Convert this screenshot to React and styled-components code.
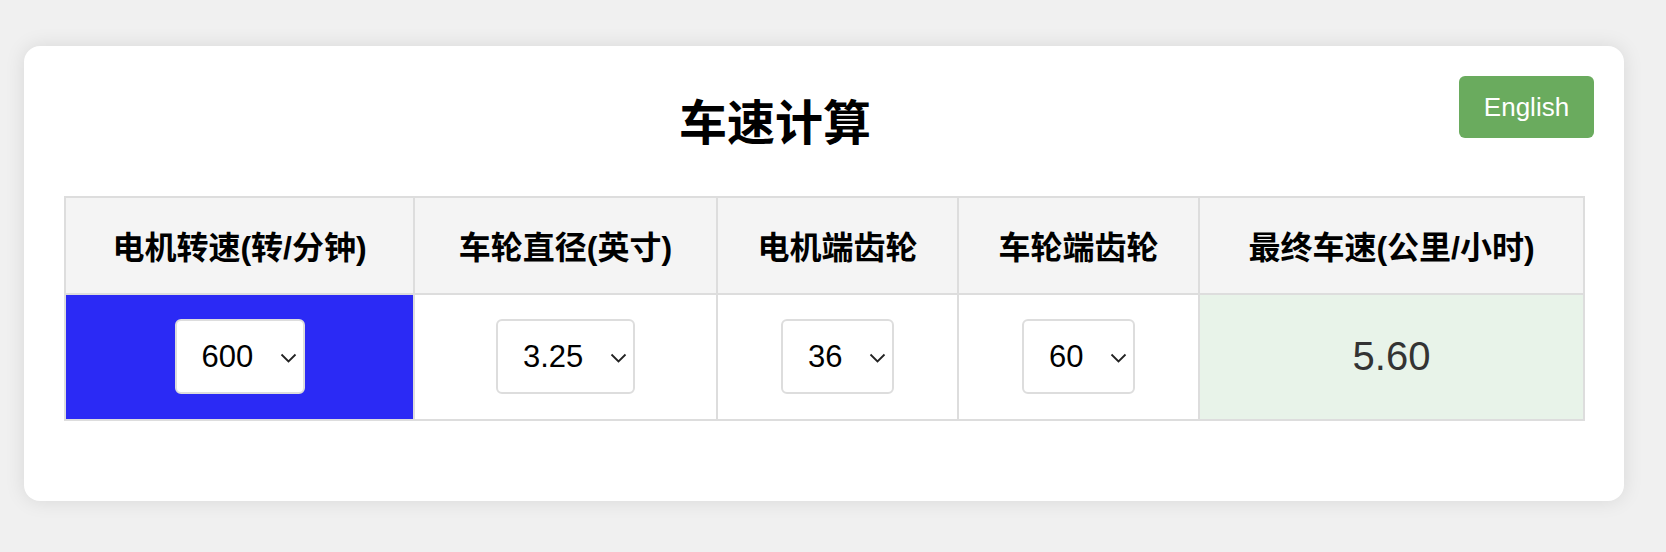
import React, { useState } from "react";
import styled, { createGlobalStyle } from "styled-components";

const GlobalStyle = createGlobalStyle`
  body {
    margin: 0;
    background: #f0f0f0;
    font-family: "Liberation Sans", Arial, "Noto Sans CJK SC", sans-serif;
  }
`;

const Page = styled.div`
  padding: 46px 0 40px 24px;
`;

const Card = styled.div`
  position: relative;
  box-sizing: border-box;
  width: 1600px;
  padding: 40px 40px 80px;
  background: #fff;
  border-radius: 16px;
  box-shadow: 0 0 20px rgba(0, 0, 0, 0.1);
`;

const LangButton = styled.button`
  position: absolute;
  top: 30px;
  right: 30px;
  width: 135px;
  height: 62px;
  border: none;
  border-radius: 6px;
  background: #6aab5e;
  color: #fff;
  font-family: inherit;
  font-size: 26px;
  cursor: pointer;
`;

const Title = styled.h1`
  margin: 9px 98px 43px 0;
  font-size: 48px;
  line-height: 1.2;
  font-weight: bold;
  text-align: center;
  color: #000;
`;

const Table = styled.table`
  width: 1519px;
  table-layout: fixed;
  border-collapse: collapse;
  border: 2px solid #ddd;
`;

const HeadCell = styled.th`
  height: 95px;
  padding: 0;
  border: 2px solid #ddd;
  background: #f4f4f4;
  font-size: 32px;
  font-weight: bold;
  color: #000;
  text-align: center;
`;

const Cell = styled.td`
  height: 124px;
  padding: 0;
  border: 2px solid #ddd;
  background: ${(p) => p.$bg || "#fff"};
  text-align: center;
  vertical-align: middle;
`;

const SelectWrap = styled.span`
  position: relative;
  display: inline-block;
  vertical-align: middle;
`;

const Select = styled.select`
  appearance: none;
  -webkit-appearance: none;
  display: block;
  height: 75px;
  padding: 0 49px 0 25px;
  border: 2px solid #ddd;
  border-radius: 6px;
  background: #fff;
  font-family: inherit;
  font-size: 31px;
  color: #000;
  outline: none;
`;

const Chevron = styled.svg`
  position: absolute;
  right: 8px;
  top: 50%;
  width: 17px;
  height: 10px;
  margin-top: -4px;
  pointer-events: none;
`;

const Result = styled.span`
  font-size: 40px;
  color: #333;
`;

const columns = [
  { label: "电机转速(转/分钟)", width: 349 },
  { label: "车轮直径(英寸)", width: 303 },
  { label: "电机端齿轮", width: 241 },
  { label: "车轮端齿轮", width: 241 },
  { label: "最终车速(公里/小时)", width: 385 },
];

const rpmOptions = [300, 400, 500, 600, 700, 800, 900];
const wheelOptions = ["2.50", "3.00", "3.25", "3.50", "4.00"];
const motorGears = [24, 30, 36, 42, 48];
const wheelGears = [48, 54, 60, 66, 72];

const Dropdown = ({ value, options, onChange }) => (
  <SelectWrap>
    <Select value={value} onChange={(e) => onChange(e.target.value)}>
      {options.map((o) => (
        <option key={o}>{o}</option>
      ))}
    </Select>
    <Chevron viewBox="0 0 17 10">
      <polyline points="1.5,1.5 8.5,8.5 15.5,1.5" fill="none" stroke="#222" strokeWidth="1.8" />
    </Chevron>
  </SelectWrap>
);

export default function App() {
  const [rpm, setRpm] = useState("600");
  const [wheel, setWheel] = useState("3.25");
  const [motor, setMotor] = useState("36");
  const [gear, setGear] = useState("60");
  const [lang, setLang] = useState("zh");

  // km/h = rpm * (motor/gear) * wheel(in) * 0.0254 * pi * 60 / 1000
  const speed =
    (Number(rpm) * (Number(motor) / Number(gear)) * Number(wheel) * 0.0254 * Math.PI * 60) /
    1000;

  return (
    <Page>
      <GlobalStyle />
      <Card>
        <LangButton onClick={() => setLang(lang === "zh" ? "en" : "zh")}>English</LangButton>
        <Title>车速计算</Title>
        <Table>
          <colgroup>
            {columns.map((c) => (
              <col key={c.label} style={{ width: c.width }} />
            ))}
          </colgroup>
          <thead>
            <tr>
              {columns.map((c) => (
                <HeadCell key={c.label}>{c.label}</HeadCell>
              ))}
            </tr>
          </thead>
          <tbody>
            <tr>
              <Cell $bg="#2b2af5">
                <Dropdown value={rpm} options={rpmOptions} onChange={setRpm} />
              </Cell>
              <Cell>
                <Dropdown value={wheel} options={wheelOptions} onChange={setWheel} />
              </Cell>
              <Cell>
                <Dropdown value={motor} options={motorGears} onChange={setMotor} />
              </Cell>
              <Cell>
                <Dropdown value={gear} options={wheelGears} onChange={setGear} />
              </Cell>
              <Cell $bg="#e8f3e9">
                <Result>{speed.toFixed(2)}</Result>
              </Cell>
            </tr>
          </tbody>
        </Table>
      </Card>
    </Page>
  );
}
